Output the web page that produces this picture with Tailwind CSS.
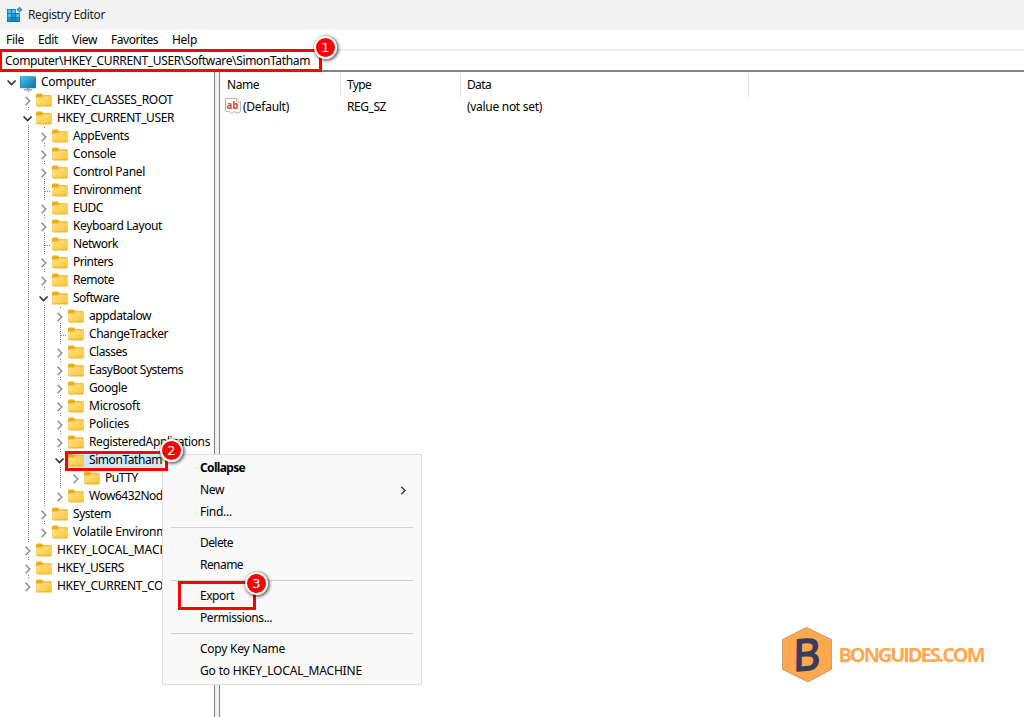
<!DOCTYPE html>
<html lang="en">
<head>
    <meta charset="UTF-8">
    <meta name="viewport" content="width=device-width, initial-scale=1.0">
    <title>Registry Editor</title>
    <script src="https://cdn.jsdelivr.net/npm/@tailwindcss/browser@4"></script>
</head>
<body class="relative w-[1024px] h-[717px] overflow-hidden bg-white text-black text-[12px] font-['Noto_Sans','Open_Sans',sans-serif]">
    <!-- shared icons -->
    <svg class="absolute" width="0" height="0">
        <defs>
            <linearGradient id="gold" x1="0" y1="0" x2="1" y2="1">
                <stop offset="0" stop-color="#ffe08a"/>
                <stop offset="1" stop-color="#fcc535"/>
            </linearGradient>
            <linearGradient id="screen" x1="0" y1="0" x2="1" y2="1">
                <stop offset="0" stop-color="#3fc8ee"/>
                <stop offset="1" stop-color="#0a6fae"/>
            </linearGradient>
        </defs>
        <symbol id="folder" viewBox="0 0 16 14">
            <path d="M0 2Q0 .5 1.5 .5H5.5L7.3 2.2H14.5Q16 2.2 16 3.5V8H0Z" fill="#f2ab12"/>
            <path d="M0 5.2Q0 4.6 .8 4.6H5.6L7.4 3.2H15Q16 3.2 16 4.2V12Q16 13.2 14.8 13.2H1.2Q0 13.2 0 12Z" fill="url(#gold)"/>
            <path d="M.6 12.9H15.4" stroke="#e5ac25" stroke-width=".8"/>
        </symbol>
        <symbol id="computer" viewBox="0 0 16 15">
            <rect x="0" y="0.3" width="16" height="12" rx=".8" fill="#2789b5"/>
            <rect x=".8" y="1" width="14.4" height="10.6" fill="url(#screen)"/>
            <path d="M6.500 12.300H9.500V13.300H12V14.600H4V13.300H6.500Z" fill="#8d9aa3"/>
        </symbol>
    </svg>

    <div class="flex flex-col h-full">
        <header class="flex items-center h-[30px] bg-[#f3f3f3] pl-[7px] shrink-0">
            <svg class="w-4 h-4" viewBox="0 0 16 16">
                <path d="M0 2H9V6H13V15H0Z" fill="#0d6ca8"/>
                <g fill="#45c0f0">
                    <rect x=".7" y="2.7" width="3.5" height="3.4"/><rect x="5" y="2.7" width="3.5" height="3.4"/>
                    <rect x=".7" y="6.9" width="3.5" height="3.4"/><rect x="5" y="6.9" width="3.5" height="3.4" fill="#2196d3"/><rect x="9.2" y="6.9" width="3.3" height="3.4"/>
                    <rect x=".7" y="11" width="3.5" height="3.3" fill="#2196d3"/><rect x="5" y="11" width="3.5" height="3.3" fill="#1a86c6"/><rect x="9.2" y="11" width="3.3" height="3.3" fill="#2196d3"/>
                </g>
                <path d="M12.4 -.1L15.3 2.7L12.4 5.5L9.6 2.7Z" fill="#1379b5"/>
                <path d="M12.4 1.2L13.9 2.7L12.4 4.2L11 2.7Z" fill="#55c8f3"/>
            </svg>
            <span data-w="77" class="ml-[5px] whitespace-nowrap text-[#1c1c1c]">Registry Editor</span>
        </header>
        <nav class="flex items-center h-[19px] pl-1.5 shrink-0 whitespace-nowrap">
            <span class="w-8"><span data-w="18">File</span></span>
            <span class="w-[34px]"><span data-w="20">Edit</span></span>
            <span class="w-[39px]"><span data-w="25">View</span></span>
            <span class="w-[61px]"><span data-w="47">Favorites</span></span>
            <span data-w="25">Help</span>
        </nav>
        <div class="flex h-[23px] shrink-0 items-stretch">
            <div class="flex items-center w-[322px] border-[3px] border-[#fe0000] border-l-2 pl-[3px] whitespace-nowrap">
                <span data-w="305">Computer\HKEY_CURRENT_USER\Software\SimonTatham</span>
            </div>
            <div class="flex-1 border-t-2 border-t-[#f0f0f0] border-b-2 border-b-[#828285]"></div>
        </div>
        <main class="flex flex-1 min-h-0">
            <div id="tree" class="w-[214px] pt-px shrink-0"></div>
            <div class="w-1.5 shrink-0 bg-[#f0f0f0] border-x border-[#808084]"></div>
            <section class="flex-1 whitespace-nowrap">
                <div class="flex h-[25px] pt-px leading-[24px]">
                    <div class="w-[121px] pl-[7px] border-r border-[#e5e5e5]"><span data-w="32">Name</span></div>
                    <div class="w-[120px] pl-1.5 border-r border-[#e5e5e5]"><span data-w="24">Type</span></div>
                    <div class="w-[288px] pl-1.5 border-r border-[#e5e5e5]"><span data-w="24">Data</span></div>
                </div>
                <div class="flex items-center h-[18px] pl-[5px] mt-px">
                    <svg class="w-4 h-4 mr-0.5 -mt-0.5 shrink-0" viewBox="0 0 16 16">
                        <path d="M.5 .5H12L15.5 4V13L14 15H11L9 13.5L6.5 15.5L4 13.5H1.5L.5 12Z" fill="#fff" stroke="#b4b4b4"/>
                        <path d="M11.5 .5V4H15.5" fill="#eee" stroke="#b4b4b4" stroke-width=".7"/>
                        <text x="1.800" y="10.500" font-family="Noto Sans" font-weight="bold" font-size="10" textLength="11.500" lengthAdjust="spacingAndGlyphs" fill="#d4451f">ab</text>
                    </svg>
                    <span class="w-[104px]"><span data-w="46">(Default)</span></span>
                    <span class="w-[120px]"><span data-w="39">REG_SZ</span></span>
                    <span data-w="75">(value not set)</span>
                </div>
            </section>
        </main>
    </div>

    <!-- context menu -->
    <div class="absolute left-[162px] top-[454px] w-[260px] h-[231px] bg-[#f9f9f9] border border-[#dfdfdf] pt-0.5 leading-[22px] whitespace-nowrap">
        <div class="h-[22px] pl-[37px] font-bold"><span data-w="45" data-bold>Collapse</span></div>
        <div class="flex items-center h-[22px] pl-[37px] pr-[14px] justify-between">
            <span data-w="24">New</span>
            <svg class="w-[7px] h-[9px]" viewBox="0 0 7 9" fill="none" stroke="#333" stroke-width="1.3"><path d="M1.2 .7L5 4.5L1.2 8.3"/></svg>
        </div>
        <div class="h-[22px] pl-[37px]"><span data-w="32">Find...</span></div>
        <div class="h-[9px] px-2 pt-1"><div class="h-px bg-[#d2d2d2]"></div></div>
        <div class="h-[22px] pl-[37px]"><span data-w="33">Delete</span></div>
        <div class="h-[22px] pl-[37px]"><span data-w="43">Rename</span></div>
        <div class="h-[9px] px-2 pt-1"><div class="h-px bg-[#d2d2d2]"></div></div>
        <div class="h-[22px] pl-[37px]"><span data-w="34">Export</span></div>
        <div class="h-[22px] pl-[37px]"><span data-w="72">Permissions...</span></div>
        <div class="h-[9px] px-2 pt-1"><div class="h-px bg-[#d2d2d2]"></div></div>
        <div class="h-[22px] pl-[37px]"><span data-w="85">Copy Key Name</span></div>
        <div class="h-[22px] pl-[37px]"><span data-w="162">Go to HKEY_LOCAL_MACHINE</span></div>
    </div>

    <!-- highlight boxes -->
    <div class="absolute left-[65px] top-[451px] w-[103px] h-5 border-[3px] border-[#fe0000]"></div>
    <div class="absolute left-[178px] top-[581px] w-[78px] h-[29px] border-[3px] border-[#fe0000]"></div>

    <!-- step badges -->
    <div class="absolute left-[314px] top-[36px] size-[23px] rounded-full border-[2.5px] border-white bg-[#fe0000] shadow-[1px_1px_3px_1px_rgba(0,0,0,0.55)] text-white text-[13px] leading-[19px] text-center font-['DejaVu_Sans',sans-serif]">1</div>
    <div class="absolute left-[160px] top-[439px] size-[23px] rounded-full border-[2.5px] border-white bg-[#fe0000] shadow-[1px_1px_3px_1px_rgba(0,0,0,0.55)] text-white text-[13px] leading-[19px] text-center font-['DejaVu_Sans',sans-serif]">2</div>
    <div class="absolute left-[245px] top-[572px] size-[23px] rounded-full border-[2.5px] border-white bg-[#fe0000] shadow-[1px_1px_3px_1px_rgba(0,0,0,0.55)] text-white text-[13px] leading-[19px] text-center font-['DejaVu_Sans',sans-serif]">3</div>

    <!-- watermark -->
    <svg class="absolute left-[780px] top-[625px]" width="208" height="60" viewBox="0 0 208 60">
        <path d="M26.500 2.300L51.500 14.500V44.500L28 57L2.500 44.500V14.500Z" fill="#ffa850" stroke="#9b8163" stroke-width=".6"/>
        <text transform="translate(13 46) rotate(-4) skewX(-5)" font-family="Open Sans" font-size="43" textLength="27" lengthAdjust="spacingAndGlyphs" fill="#373e5c" stroke="#373e5c" stroke-width="1.900" stroke-linejoin="round">B</text>
        <text x="58.500" y="36.500" font-family="Open Sans" font-weight="bold" font-size="20" textLength="147" lengthAdjust="spacing" fill="#ffa850">BONGUIDES.COM</text>
    </svg>

    <script>
    // [depth, state, label, label width]
    const keys = [
        [0, 'open', 'Computer', 55],
        [1, 'closed', 'HKEY_CLASSES_ROOT', 116],
        [1, 'open', 'HKEY_CURRENT_USER', 117],
        [2, 'closed', 'AppEvents', 56],
        [2, 'closed', 'Console', 43],
        [2, 'closed', 'Control Panel', 72],
        [2, 'leaf', 'Environment', 68],
        [2, 'closed', 'EUDC', 30],
        [2, 'closed', 'Keyboard Layout', 89],
        [2, 'leaf', 'Network', 45],
        [2, 'closed', 'Printers', 40],
        [2, 'closed', 'Remote', 41],
        [2, 'open', 'Software', 46],
        [3, 'closed', 'appdatalow', 62],
        [3, 'leaf', 'ChangeTracker', 79],
        [3, 'closed', 'Classes', 38],
        [3, 'closed', 'EasyBoot Systems', 94],
        [3, 'closed', 'Google', 38],
        [3, 'closed', 'Microsoft', 51],
        [3, 'closed', 'Policies', 40],
        [3, 'closed', 'RegisteredApplications', 121],
        [3, 'open', 'SimonTatham', 73],
        [4, 'closed', 'PuTTY', 33],
        [3, 'closed', 'Wow6432Node', 80],
        [2, 'closed', 'System', 38],
        [2, 'closed', 'Volatile Environment', 112],
        [1, 'closed', 'HKEY_LOCAL_MACHINE', 131],
        [1, 'closed', 'HKEY_USERS', 67],
        [1, 'closed', 'HKEY_CURRENT_CONFIG', 133]
    ];

    // true when another key of the same level follows under the same parent
    function hasNext(i, depth) {
        for (let j = i + 1; j < keys.length; j++) {
            if (keys[j][0] < depth) return false;
            if (keys[j][0] === depth) return true;
        }
        return false;
    }

    const lines = c => `<svg class="w-4 h-[18px] shrink-0" viewBox="0 0 16 18" fill="none" shape-rendering="crispEdges" stroke="#777" stroke-dasharray="1 1">${c}</svg>`;
    document.getElementById('tree').innerHTML = keys.map(([depth, state, label, width], i) => {
        let cols = '';
        for (let d = 0; d < depth; d++) {
            cols += lines(d > 0 && hasNext(i, d) ? '<path d="M9.5 0V18"/>' : '');
        }
        let own = '';
        if (state === 'leaf') {
            own = '<path d="M9.5 0V18M10 10.5H16"/>';
        } else {
            if (depth > 0) own += '<path d="M9.5 0V2"/>';
            if (depth > 0 && hasNext(i, depth)) own += '<path d="M9.5 16V18"/>';
            own += state === 'open'
                ? '<path d="M4.600 7.500L8.600 11.500L12.600 7.500" stroke="#333" stroke-width="1.700" stroke-dasharray="none" shape-rendering="auto"/>'
                : '<path d="M6.600 5.800L10.700 10L6.600 14.200" stroke="#929292" stroke-width="1.600" stroke-dasharray="none" shape-rendering="auto"/>';
        }
        const icon = depth === 0
            ? '<svg class="w-4 h-[15px] shrink-0 mt-0.5"><use href="#computer"/></svg>'
            : '<svg class="w-4 h-[14px] shrink-0 mb-px"><use href="#folder"/></svg>';
        const selected = label === 'SimonTatham' ? 'bg-[#cce8ff]' : '';
        return `<div class="flex items-center h-[18px] pl-[3px] whitespace-nowrap">${cols}${lines(own)}<span class="w-px"></span>
            <span class="flex items-center h-[18px] ${selected}">${icon}<span class="pl-[5px] leading-[18px]"><span data-w="${width}">${label}</span></span></span></div>`;
    }).join('');

    // space each label out to its width
    const ctx = document.createElement('canvas').getContext('2d');
    document.querySelectorAll('[data-w]').forEach(el => {
        ctx.font = ('bold' in el.dataset ? 'bold ' : '') + '12px "Noto Sans"';
        const gap = (el.dataset.w - ctx.measureText(el.textContent).width) / el.textContent.length;
        el.style.letterSpacing = gap + 'px';
    });
    </script>
</body>
</html>
